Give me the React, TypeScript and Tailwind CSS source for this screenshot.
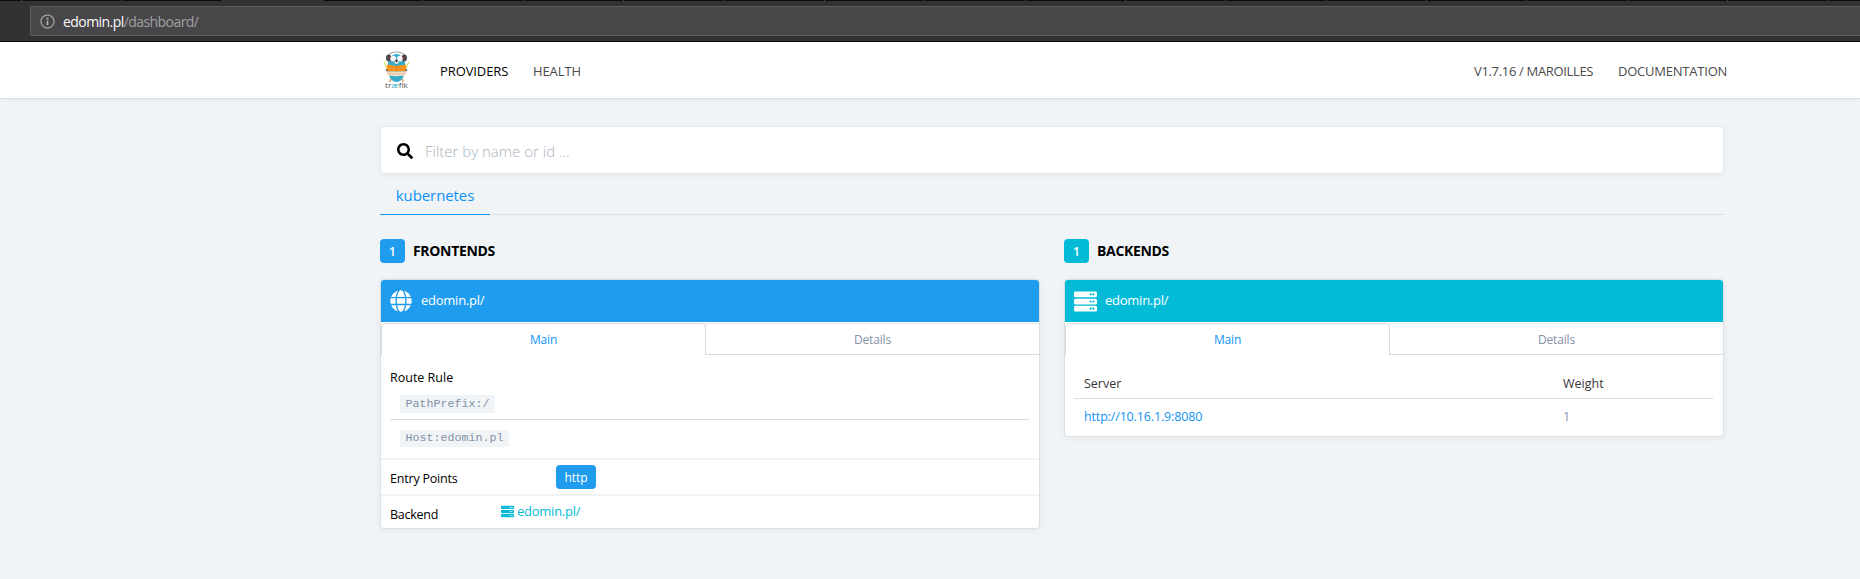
import React from "react";
import { FaGlobe, FaSearch, FaServer } from "react-icons/fa";

const browserTabs = [21, 99, 100, 99, 99, 100, 99, 99, 100, 99, 100, 99, 99, 100, 99, 99, 100, 99, 100];
const activeTab = 3;

function BrowserBar() {
  return (
    <div className="flex h-[42px] flex-col border-b border-[#0c0c0d] bg-[#323234]">
      <div className="flex h-px shrink-0 gap-px overflow-hidden bg-[#4a4a4c]">
        {browserTabs.map((w, i) => (
          <div key={i} className={i === activeTab ? "h-px shrink-0 bg-[#323234]" : "h-px shrink-0 bg-[#0c0c0d]"} style={{ width: w }} />
        ))}
        <div className="h-px flex-1 bg-[#0c0c0d]" />
      </div>
      <div className="mt-[5px] ml-[30px] flex h-[30px] items-center rounded-l-[2px] border border-r-0 border-[#5c5c5e] bg-[#474749] pl-[9px]">
        <svg viewBox="0 0 16 16" className="size-[15px] shrink-0" fill="none" stroke="#b1b1b3" strokeWidth="1.2">
          <circle cx="8" cy="8" r="7" />
          <path d="M8 7.2v4.6" strokeWidth="1.8" />
          <path d="M8 4v1.9" strokeWidth="1.8" />
        </svg>
        <span className="mt-[2px] ml-[8px] text-[14px] leading-none tracking-[-0.56px] text-[#a0a0a2]">
          <span className="text-[#f9f9fa]">edomin.pl</span>/dashboard/
        </span>
      </div>
    </div>
  );
}

function Logo() {
  return (
    <svg viewBox="0 0 27 38" className="h-[38px] w-[27px]">
      <path d="M1 10.500l3.500 8M26 10.500l-3.500 8" stroke="#cddc39" strokeWidth="1" />
      <path d="M8.500 27l-2 4M18.500 27l2 4" stroke="#e9b98d" strokeWidth="2" />
      <ellipse cx="13.5" cy="17" rx="9" ry="14" fill="#37abc8" />
      <path d="M6 4C8 0 19 0 21 4" fill="none" stroke="#a5a5a5" strokeWidth="1.2" />
      <ellipse cx="5.6" cy="7" rx="2.6" ry="3.400" fill="#4a4a4a" />
      <ellipse cx="21.4" cy="7" rx="2.6" ry="3.400" fill="#4a4a4a" />
      <path d="M6.800 4.500l.6 5M20.200 4.500l-.6 5" stroke="#9c2a3a" strokeWidth="1" />
      <circle cx="10.2" cy="7.6" r="2.9" fill="#f4f7f8" />
      <circle cx="16.8" cy="7.6" r="2.9" fill="#f4f7f8" />
      <ellipse cx="13.5" cy="11.3" rx="1.9" ry="1.8" fill="#f3e4d8" />
      <circle cx="13.5" cy="9.800" r="1.2" fill="#333" />
      <path d="M4 13.500l9.500 1.500 9.500-1.500v7H4z" fill="#f7931e" />
      <path d="M13.500 15v6" stroke="#b86f1a" strokeWidth=".6" />
      <path d="M4 20.500h19v3.500c-4 1.500-15 1.500-19 0z" fill="#f2dfcb" />
      <path d="M4 22.200c5 1 14 1 19 0" stroke="#d9a878" strokeWidth=".6" fill="none" />
      <path d="M3 18.500l1.500 1.500M24 18.500l-1.500 1.500" stroke="#444" strokeWidth="1.200" />
      <text x="2" y="36.500" fontSize="8" textLength="23" lengthAdjust="spacingAndGlyphs" fill="#555">
        tr<tspan fill="#37abc8">æ</tspan>fik
      </text>
    </svg>
  );
}

function Header() {
  return (
    <header className="flex h-[57px] items-center border-b border-[#dde0e4] bg-white pr-[132px] pl-[383px] text-[13px] font-medium text-[#4a4a4a] shadow-[0_1px_4px_rgba(0,0,0,0.06)]">
      <Logo />
      <nav className="mt-[3px] ml-[30px] flex flex-1 gap-[24px]">
        <a className="w-[69px] tracking-[-0.1px] whitespace-nowrap text-black">PROVIDERS</a>
        <a className="flex-1 tracking-[-0.1px]">HEALTH</a>
        <a className="w-[120px] tracking-[-0.33px] whitespace-nowrap">V1.7.16 / MAROILLES</a>
        <a className="w-[110px] tracking-[-0.22px] whitespace-nowrap">DOCUMENTATION</a>
      </nav>
    </header>
  );
}

function SectionTitle({ color, title }: { color: string; title: string }) {
  return (
    <h2 className="flex h-[24px] items-center">
      <span className={`flex h-[24px] w-[25px] items-center justify-center rounded-[4px] pt-px text-[12px] font-semibold text-white ${color}`}>1</span>
      <span className="mb-px ml-[8px] text-[14px] font-bold tracking-[-0.33px] text-black">{title}</span>
    </h2>
  );
}

function Card({ color, icon, children }: { color: string; icon: React.ReactNode; children: React.ReactNode }) {
  return (
    <article className="mt-[16px] overflow-hidden rounded-[4px] border border-[#dbdfe3] bg-white shadow-[0_1px_6px_rgba(0,0,0,0.06)]">
      <div className={`flex h-[42px] items-center pl-[9px] text-[13px] tracking-[-0.25px] text-white ${color}`}>
        <span className="flex w-[31px]">{icon}</span>
        edomin.pl/
      </div>
      <div className="flex h-[33px] pt-px text-[12px] tracking-[-0.15px]">
        <div className="flex w-[325px] items-center justify-center rounded-t-[4px] border border-b-0 border-[#dbdbdb] pt-px text-[#0f93f5]">Main</div>
        <div className="flex flex-1 items-center justify-center border-t border-b border-t-[#e9ecef] border-b-[#dbdbdb] pt-[2px] text-[#8492a6]">Details</div>
      </div>
      {children}
    </article>
  );
}

function Code({ children }: { children: string }) {
  return <code className="bg-[#f0f4f7] px-[5.500px] font-['Liberation_Mono',monospace] text-[11.670px] text-[#8392a5]">{children}</code>;
}

export default function App() {
  return (
    <div className="h-[579px] overflow-hidden bg-[#f0f4f7] font-['Open_Sans','Noto_Sans',sans-serif]">
      <BrowserBar />
      <Header />
      <main className="ml-[380px] w-[1344px] pt-[27px]">
        <div className="flex h-[48px] items-center rounded-[4px] border border-[#e3e8ec] bg-white pl-[16px] shadow-[0_1px_6px_rgba(0,0,0,0.06)]">
          <FaSearch className="mt-px size-[16px] text-black" />
          <span className="mt-[2px] ml-[12px] text-[15px] font-light text-[#a9b4c0]">Filter by name or id ...</span>
        </div>
        <div className="flex h-[41px] border-b border-[#dbdfe3]">
          <div className="flex h-[41px] w-[110px] items-center justify-center border-b border-[#0f93f5] pt-[2px] text-[15px] tracking-[-0.08px] text-[#0f93f5]">kubernetes</div>
        </div>
        <div className="mt-[24px] flex items-start gap-[24px]">
          <section className="w-[660px]">
            <SectionTitle color="bg-[#209cee]" title="FRONTENDS" />
            <Card color="bg-[#209cee]" icon={<FaGlobe className="size-[22px]" />}>
              <div className="text-[12.500px] text-black">
                <div className="h-[105px] border-b-2 border-[#f0f4f7] pt-[13px] pr-[10px] pl-[9px]">
                  <div className="h-[27px] leading-[20px]">Route Rule</div>
                  <div className="flex h-[25px] items-start border-b border-[#dbdbdb] pl-[10px] leading-[18px]"><Code>PathPrefix:/</Code></div>
                  <div className="flex pt-[10px] pl-[10px] leading-[17px]"><Code>Host:edomin.pl</Code></div>
                </div>
                <div className="flex h-[36px] border-b-2 border-[#f0f4f7] pt-[5px] pl-[9px]">
                  <div className="w-[166px] pt-[4px] leading-[20px] tracking-[-0.2px]">Entry Points</div>
                  <span className="flex h-[24px] w-[40px] items-center justify-center rounded-[4px] pt-[2px] text-[12px] tracking-[-0.1px] bg-[#209cee] text-white">http</span>
                </div>
                <div className="flex h-[32px] pl-[9px]">
                  <div className="w-[111px] pt-[9px] leading-[20px] tracking-[-0.25px]">Backend</div>
                  <a className="flex h-[32px] items-center text-[13px] tracking-[-0.25px] text-[#04bbd7]">
                    <FaServer className="mr-[3px] mb-px size-[13px]" />
                    edomin.pl/
                  </a>
                </div>
              </div>
            </Card>
          </section>
          <section className="w-[660px]">
            <SectionTitle color="bg-[#04bbd7]" title="BACKENDS" />
            <Card color="bg-[#04bbd7]" icon={<FaServer className="size-[23px]" />}>
              <div className="h-[81px] pt-[14px] pr-[10px] pl-[9px] text-[12.500px]">
                <div className="flex h-[30px] border-b border-[#dbdbdb] pt-[5px] pl-[10px] leading-[20px] text-[#363636]">
                  <div className="w-[479px]">Server</div>
                  <div>Weight</div>
                </div>
                <div className="flex pt-[8px] pl-[10px] leading-[20px]">
                  <a className="w-[479px] tracking-[-0.15px] text-[#0f93f5]">http://10.16.1.9:8080</a>
                  <div className="text-[#8492a6]">1</div>
                </div>
              </div>
            </Card>
          </section>
        </div>
      </main>
    </div>
  );
}
